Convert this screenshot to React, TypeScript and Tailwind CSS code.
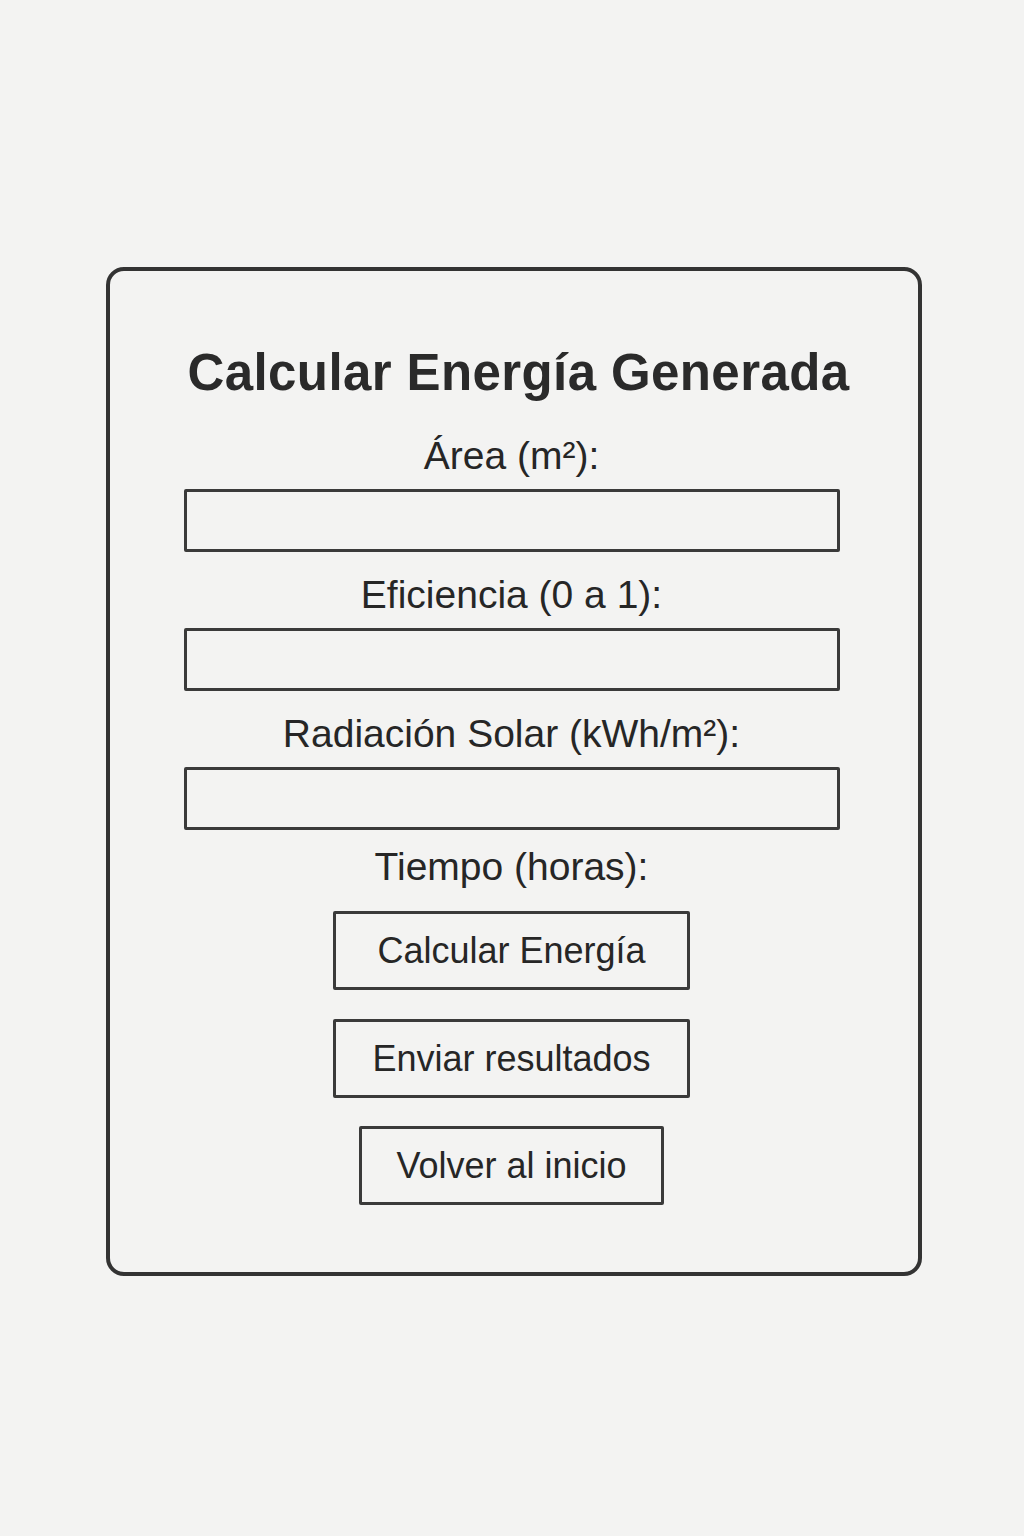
export default function App() {
  const labelClass = "text-[39px] leading-[44px] text-[#262626] text-center";
  const inputClass = "block w-[656px] h-[63px] border-[3px] border-[#3a3a3a] rounded-[2px] bg-transparent";
  const buttonClass =
    "h-[79px] border-[3px] border-[#3a3a3a] rounded-[2px] bg-transparent text-[36px] leading-[40px] text-[#262626]";

  return (
    <div
      className="min-h-[1536px] w-full bg-[#f3f3f2] pt-[267px]"
      style={{ fontFamily: '"Liberation Sans", Arial, sans-serif' }}
    >
      <div className="ml-[106px] w-[816px] h-[1009px] border-[4px] border-[#333333] rounded-[18px] flex flex-col items-center pt-[73px] pr-[5px]">
        <h1 className="ml-[14px] text-[51px] leading-[58px] font-bold text-[#2a2a2a] tracking-[0.4px]">
          Calcular Energía Generada
        </h1>

        <label className={`${labelClass} mt-[32px]`}>Área (m²):</label>
        <input className={`${inputClass} mt-[11px]`} type="text" />

        <label className={`${labelClass} mt-[21px]`}>Eficiencia (0 a 1):</label>
        <input className={`${inputClass} mt-[11px]`} type="text" />

        <label className={`${labelClass} mt-[21px]`}>Radiación Solar (kWh/m²):</label>
        <input className={`${inputClass} mt-[11px]`} type="text" />

        <label className={`${labelClass} mt-[15px]`}>Tiempo (horas):</label>

        <button className={`${buttonClass} w-[357px] mt-[22px]`}>Calcular Energía</button>
        <button className={`${buttonClass} w-[357px] mt-[29px]`}>Enviar resultados</button>
        <button className={`${buttonClass} w-[305px] mt-[28px]`}>Volver al inicio</button>
      </div>
    </div>
  );
}
